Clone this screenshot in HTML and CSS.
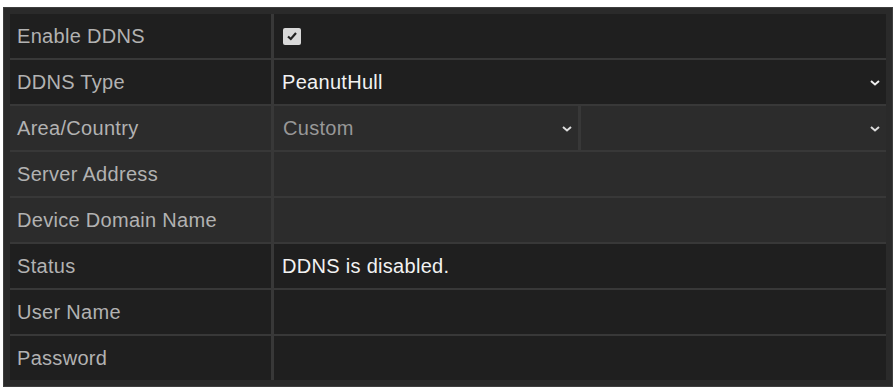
FILE: index.html
```html
<!DOCTYPE html>
<html lang="en">
<head>
  <meta charset="UTF-8" />
  <title>DDNS Settings</title>
  <link rel="stylesheet" href="styles.css">
</head>
<body>
  <!-- DDNS settings panel -->
  <div class="panel">
    <div class="form">
      <div class="label dark">Enable DDNS</div>
      <div class="value dark">
        <span class="check">
          <svg width="12" height="10" viewBox="0 0 12 10"><path d="M2 5.5 L4.8 8 L10 2" fill="none" stroke="#222" stroke-width="2.2"/></svg>
        </span>
      </div>

      <div class="label dark">DDNS Type</div>
      <div class="value dark select">
        <span class="text">PeanutHull</span>
        <svg class="chev" width="10" height="6" viewBox="0 0 10 6"><path d="M1 1 L5 4.5 L9 1" fill="none" stroke="#eee" stroke-width="2"/></svg>
      </div>

      <div class="label grey">Area/Country</div>
      <div class="value split">
        <div class="part grey select">
          <span class="muted">Custom</span>
          <svg class="chev" width="10" height="6" viewBox="0 0 10 6"><path d="M1 1 L5 4.5 L9 1" fill="none" stroke="#ddd" stroke-width="2"/></svg>
        </div>
        <div class="part grey select">
          <span class="muted"></span>
          <svg class="chev" width="10" height="6" viewBox="0 0 10 6"><path d="M1 1 L5 4.5 L9 1" fill="none" stroke="#ddd" stroke-width="2"/></svg>
        </div>
      </div>

      <div class="label grey">Server Address</div>
      <div class="value grey"></div>

      <div class="label grey">Device Domain Name</div>
      <div class="value grey"></div>

      <div class="label dark">Status</div>
      <div class="value dark"><span class="text">DDNS is disabled.</span></div>

      <div class="label dark">User Name</div>
      <div class="value dark"></div>

      <div class="label dark">Password</div>
      <div class="value dark"></div>
    </div>
  </div>
</body>
</html>
```

FILE: styles.css
```css
body { margin: 0; background: #fff; font-family: "Liberation Sans", Arial, sans-serif; }
.panel {
  margin: 7px 0 0 3px;
  width: 876px;
  background: #2a2a2a;
  border: 1px solid #3e3e3e;
  padding: 6px;
}
.form {
  display: grid;
  grid-template-columns: 261px 1fr;
  grid-auto-rows: 44px;
  gap: 2px 3px;
  background: #383838;
}
.label, .value {
  display: flex;
  align-items: center;
  font-size: 20px;
  letter-spacing: 0.3px;
}
.label { padding-left: 7px; color: #b2b2b2; }
.value { padding-left: 8px; color: #f2f2f2; }
.dark { background: #1f1f1f; }
.grey { background: #2c2c2c; }
.select { justify-content: space-between; padding-right: 6px; }
.split { padding: 0; gap: 3px; background: #383838; }
.part { flex: 1; height: 100%; display: flex; align-items: center; padding-left: 9px; }
.part:first-child { flex: 0 0 289px; }
.muted { color: #989898; }
.check {
  width: 18px;
  height: 17px;
  margin-left: 1px;
  background: #d9d9d9;
  border-radius: 2px;
  display: flex;
  align-items: center;
  justify-content: center;
}
.chev { margin-top: 2px; }
```
